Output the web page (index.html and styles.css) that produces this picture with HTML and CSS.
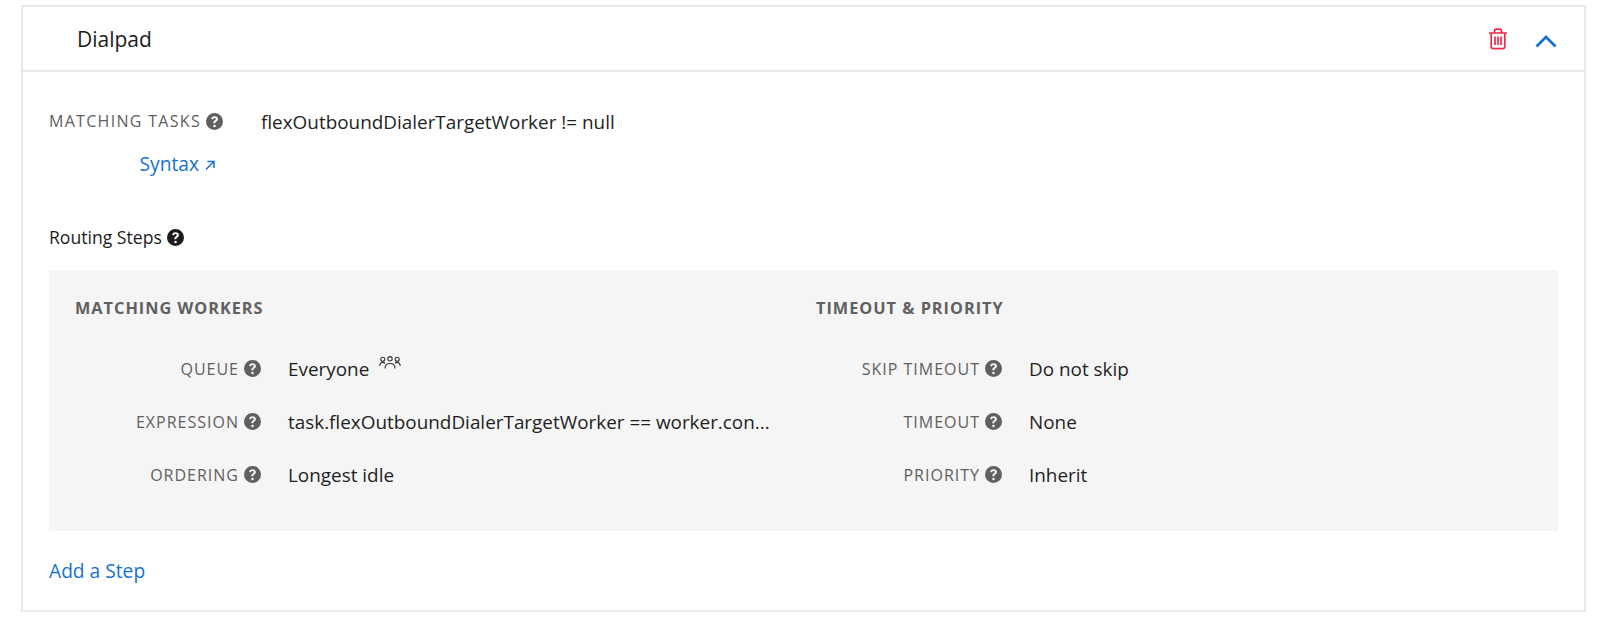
FILE: index.html
```html
<!DOCTYPE html>
<html lang="en">
<head>
<meta charset="utf-8">
<title>Dialpad</title>
<link rel="stylesheet" href="styles.css">
</head>
<body>
<svg class="defs" width="0" height="0" aria-hidden="true">
  <symbol id="help" viewBox="0 0 16 16">
    <path fill="currentColor" fill-rule="evenodd" d="M8 0a8 8 0 1 1 0 16A8 8 0 0 1 8 0Zm.1 3C6.400 3 5.200 3.800 4.800 5.300l1.800.7c.2-.8.700-1.300 1.400-1.300.7 0 1.200.4 1.200 1 0 .5-.3.8-1 1.300-.9.600-1.300 1.200-1.300 2.200v.5h1.900v-.3c0-.5.200-.8.900-1.300 1-.7 1.500-1.400 1.500-2.500C11.200 4 9.900 3 8.100 3ZM8 11a1.200 1.200 0 1 0 0 2.400A1.200 1.200 0 0 0 8 11Z"/>
  </symbol>
</svg>
<section class="card">
  <header class="card-head">
    <h2 class="card-title">Dialpad</h2>
    <div class="card-actions">
      <svg class="trash" viewBox="0 0 20 22" width="20" height="22" aria-hidden="true">
        <path d="M1 5h18M6.500 5V3.200C6.500 2 7.300 1.200 8.500 1.200h3c1.200 0 2 .8 2 2V5M3.200 5v13.500c0 1.300.8 2.100 2.100 2.100h9.400c1.300 0 2.100-.8 2.100-2.100V5M7 8.500v8.500M10 8.500v8.500M13 8.500v8.500"/>
      </svg>
      <svg class="chevron" viewBox="0 0 22 13" width="22" height="13" aria-hidden="true">
        <path d="M1.500 11.500 11 2l9.500 9.500"/>
      </svg>
    </div>
  </header>
  <div class="card-body">
    <div class="match">
      <div class="match-side">
        <div class="label">MATCHING TASKS <svg class="help"><use href="#help"/></svg></div>
        <a class="link syntax" href="#">Syntax
          <svg class="ext" viewBox="0 0 12 12" width="12" height="12" aria-hidden="true"><path d="M2 10.500 10 2.500M3.500 2.500H10V9"/></svg>
        </a>
      </div>
      <div class="value match-value">flexOutboundDialerTargetWorker != null</div>
    </div>
    <h3 class="steps-title">Routing Steps <svg class="help"><use href="#help"/></svg></h3>
    <div class="panel">
      <div class="col">
        <h4 class="col-title">MATCHING WORKERS</h4>
        <div class="row">
          <div class="label row-label">QUEUE <svg class="help"><use href="#help"/></svg></div>
          <div class="value">Everyone
            <svg class="people" viewBox="0 0 22 14" width="22" height="14" aria-hidden="true">
              <circle cx="3.800" cy="3.200" r="2"/><circle cx="11" cy="2.800" r="2.200"/><circle cx="18.200" cy="3.200" r="2"/>
              <path d="M.8 10c0-2.400 1.200-3.600 3-3.600 1 0 1.700.3 2.300 1M6 12.500c0-3.500 2-5 5-5s5 1.500 5 5M21.200 10c0-2.400-1.200-3.600-3-3.600-1 0-1.700.3-2.300 1"/>
            </svg>
          </div>
        </div>
        <div class="row">
          <div class="label row-label">EXPRESSION <svg class="help"><use href="#help"/></svg></div>
          <div class="value">task.flexOutboundDialerTargetWorker == worker.con...</div>
        </div>
        <div class="row">
          <div class="label row-label">ORDERING <svg class="help"><use href="#help"/></svg></div>
          <div class="value">Longest idle</div>
        </div>
      </div>
      <div class="col">
        <h4 class="col-title">TIMEOUT &amp; PRIORITY</h4>
        <div class="row">
          <div class="label row-label">SKIP TIMEOUT <svg class="help"><use href="#help"/></svg></div>
          <div class="value">Do not skip</div>
        </div>
        <div class="row">
          <div class="label row-label">TIMEOUT <svg class="help"><use href="#help"/></svg></div>
          <div class="value">None</div>
        </div>
        <div class="row">
          <div class="label row-label">PRIORITY <svg class="help"><use href="#help"/></svg></div>
          <div class="value">Inherit</div>
        </div>
      </div>
    </div>
    <a class="link add" href="#">Add a Step</a>
  </div>
</section>
</body>
</html>
```
FILE: styles.css
```css
* { box-sizing: border-box; }
html, body { margin: 0; background: #fff; }
body {
  height: 628px;
  padding: 5px 14px 0 21px;
  font-family: "Open Sans", "Noto Sans", sans-serif;
  color: #222;
  overflow: hidden;
}
.defs { position: absolute; }
.card {
  height: 607px;
  border: 2px solid #e9e9e9;
  background: #fff;
}
.card-head {
  height: 65px;
  border-bottom: 2px solid #e9e9e9;
  display: flex;
  align-items: center;
  justify-content: space-between;
  padding: 0 27px 0 54px;
}
.card-title { margin: 0; font-size: 21px; font-weight: 400; color: #1c1c1c; }
.card-actions { display: flex; align-items: center; gap: 27px; }
.trash { fill: none; stroke: #ee2a45; stroke-width: 1.700; }
.chevron { fill: none; stroke: #1473ce; stroke-width: 2.800; margin-top: 6px; }
.card-body { padding: 35px 26px 0; }
.match { display: flex; gap: 39px; }
.match-side { width: 173px; display: flex; flex-direction: column; align-items: flex-end; }
.match-side .label { align-self: flex-start; letter-spacing: 1.300px; }
.label {
  display: flex;
  align-items: center;
  gap: 5px;
  height: 28px;
  font-size: 16px;
  letter-spacing: 1px;
  color: #606060;
  white-space: nowrap;
}
.help { width: 17px; height: 17px; color: #606060; flex: none; }
.link { color: #1473ce; text-decoration: none; font-size: 19.200px; }
.syntax { display: flex; align-items: center; gap: 5px; margin-top: 14px; height: 28px; padding-right: 6px; }
.ext { fill: none; stroke: #1473ce; stroke-width: 1.500; margin-top: 4px; }
.value { font-size: 18.900px; color: #1f1f1f; line-height: 28px; white-space: nowrap; }
.match-value { margin-top: 1px; }
.steps-title {
  display: flex; align-items: center; gap: 5px;
  margin: 46px 0 0;
  height: 28px;
  font-size: 17.600px;
  font-weight: 400;
  color: #1c1c1c;
}
.steps-title .help { color: #1c1c1c; }
.panel {
  display: flex;
  margin-top: 19px;
  height: 261px;
  background: #f5f5f5;
  padding: 25px 0 0 26px;
}
.col { width: 741px; }
.col-title {
  margin: 0 0 21px;
  height: 26px;
  line-height: 26px;
  font-size: 16.300px;
  font-weight: 700;
  letter-spacing: 1px;
  color: #606060;
}
.row { display: flex; align-items: center; height: 53px; gap: 27px; }
.row-label { width: 186px; justify-content: flex-end; }
.people { fill: none; stroke: #333; stroke-width: 1.100; vertical-align: 6px; margin-left: 5px; }
.add { display: block; margin-top: 26px; line-height: 28px; }
```
